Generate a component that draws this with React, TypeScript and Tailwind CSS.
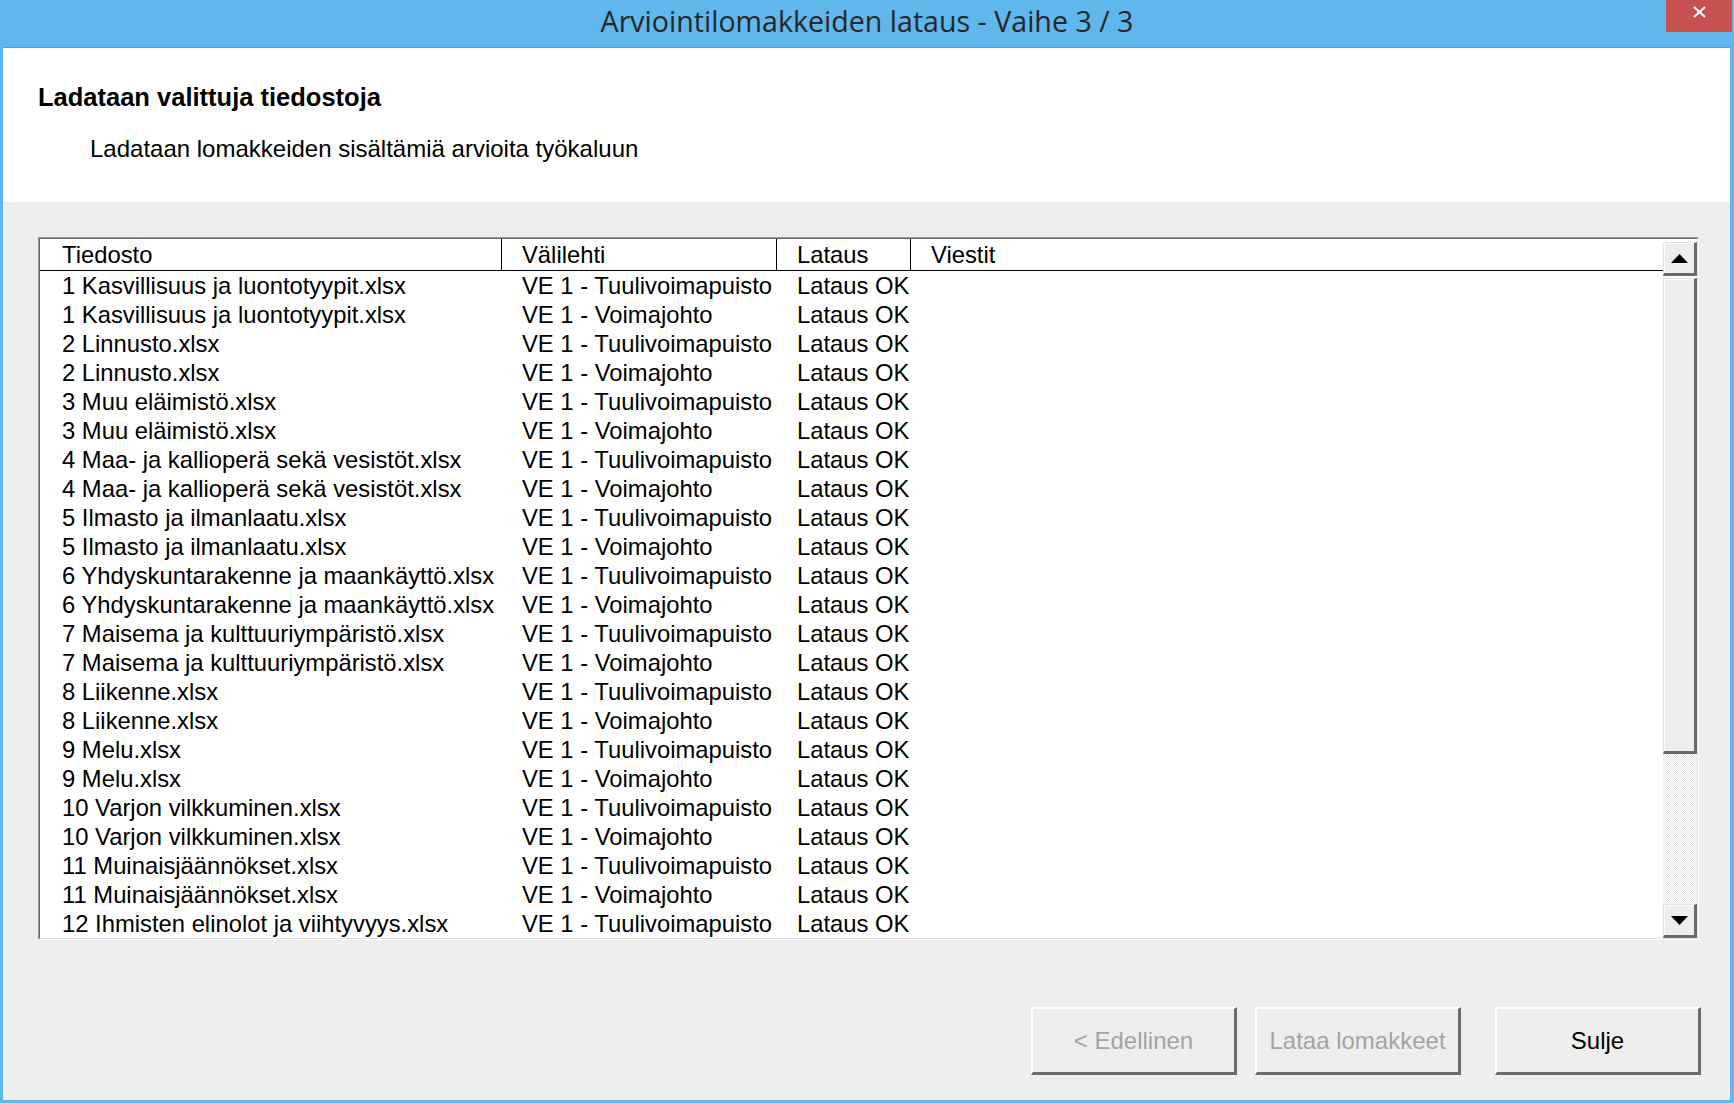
import React from 'react';

const files = [
    '1 Kasvillisuus ja luontotyypit.xlsx',
    '2 Linnusto.xlsx',
    '3 Muu eläimistö.xlsx',
    '4 Maa- ja kallioperä sekä vesistöt.xlsx',
    '5 Ilmasto ja ilmanlaatu.xlsx',
    '6 Yhdyskuntarakenne ja maankäyttö.xlsx',
    '7 Maisema ja kulttuuriympäristö.xlsx',
    '8 Liikenne.xlsx',
    '9 Melu.xlsx',
    '10 Varjon vilkkuminen.xlsx',
    '11 Muinaisjäännökset.xlsx',
    '12 Ihmisten elinolot ja viihtyvyys.xlsx',
];

const rows = files.flatMap((f) => [
    { file: f, tab: 'VE 1 - Tuulivoimapuisto', status: 'Lataus OK' },
    { file: f, tab: 'VE 1 - Voimajohto', status: 'Lataus OK' },
]);

const cols = 'grid grid-cols-[462px_275px_134px_1fr]';

const ScrollButton: React.FC<{ dir: 'up' | 'down' }> = ({ dir }) => (
    <div className="h-[34px] border-t border-l border-[#e3e3e3] border-b-[3px] border-r-[3px] border-b-[#6a6a6a] border-r-[#6a6a6a] bg-[#eeeeee]">
        <div className="h-full border-t border-l border-white flex items-center justify-center">
            <svg width="17" height="9" viewBox="0 0 17 9">
                {dir === 'up' ? <polygon points="8.5,0 17,9 0,9" fill="#000" /> : <polygon points="0,0 17,0 8.5,9" fill="#000" />}
            </svg>
        </div>
    </div>
);

const DialogButton: React.FC<{ label: string; disabled?: boolean }> = ({ label, disabled }) => (
    <button
        className={`w-[206px] h-[68px] bg-[#eeeeee] border-t-2 border-l-2 border-white border-b-[3px] border-r-[3px] border-b-[#6a6a6a] border-r-[#6a6a6a] text-[24px] ${disabled ? 'text-[#a3a3a3]' : 'text-black'}`}
    >
        {label}
    </button>
);

const App: React.FC = () => {
    return (
        <div className="w-[1734px] h-[1103px] bg-[#5fb7ec] flex flex-col font-['Liberation_Sans',Arial,sans-serif] text-black overflow-hidden">
            {/* title bar */}
            <div className="relative h-[47px] shrink-0 flex justify-center">
                <span className="font-['Open_Sans',sans-serif] text-[28.6px] leading-[42px] text-[#262626]">
                    Arviointilomakkeiden lataus - Vaihe 3 / 3
                </span>
                <div className="absolute top-0 right-[2px] w-[66px] h-[32px] bg-[#c75050] flex items-start justify-center pt-[6px]">
                    <svg width="13" height="12" viewBox="0 0 13 12">
                        <path d="M1 1 L12 11 M12 1 L1 11" stroke="#fff" strokeWidth="2.2" />
                    </svg>
                </div>
            </div>

            <div className="flex-1 ml-[3px] mr-[4px] mb-[3px] flex flex-col border-t border-[#4d9fd6]">
                {/* header panel */}
                <div className="h-[154px] shrink-0 bg-white pl-[35px] pt-[34px]">
                    <div className="text-[25.5px] font-bold leading-[30px]">Ladataan valittuja tiedostoja</div>
                    <div className="text-[24px] leading-[30px] mt-[22px] pl-[52px]">
                        Ladataan lomakkeiden sisältämiä arvioita työkaluun
                    </div>
                </div>

                {/* content */}
                <div className="flex-1 bg-[#eeeeee] flex flex-col">
                    <div className="mt-[35px] ml-[35px] mr-[31px] h-[703px] border-t border-l border-[#9a9a9a] border-b border-r border-b-white border-r-white">
                        <div className="h-full border-t border-l border-[#696969] border-b border-r border-b-[#e3e3e3] border-r-[#e3e3e3] flex">
                            <div className="flex-1 bg-white overflow-hidden text-[23.8px]">
                                <div className={`${cols} h-[32px] border-b border-black leading-[31px]`}>
                                    <div className="pl-[22px] border-r border-black">Tiedosto</div>
                                    <div className="pl-[20px] border-r border-black">Välilehti</div>
                                    <div className="pl-[20px] border-r border-black">Lataus</div>
                                    <div className="pl-[20px]">Viestit</div>
                                </div>
                                {rows.map((r, i) => (
                                    <div key={i} className={`${cols} h-[29px] leading-[29px] whitespace-nowrap`}>
                                        <div className="pl-[22px]">{r.file}</div>
                                        <div className="pl-[20px]">{r.tab}</div>
                                        <div className="pl-[20px]">{r.status}</div>
                                        <div />
                                    </div>
                                ))}
                            </div>
                            {/* scrollbar */}
                            <div className="w-[34px] bg-white pt-[3px] flex flex-col">
                                <ScrollButton dir="up" />
                                <div className="h-[476px] mt-[2px] border-t border-l border-[#e3e3e3] border-b-[3px] border-r-[3px] border-b-[#6a6a6a] border-r-[#6a6a6a] bg-[#eeeeee]">
                                    <div className="h-full border-t border-l border-white" />
                                </div>
                                <div className="flex-1 bg-[repeating-conic-gradient(#e6e6e6_0%_25%,#ffffff_0%_50%)] bg-[length:2px_2px]" />
                                <ScrollButton dir="down" />
                            </div>
                        </div>
                    </div>

                    <div className="mt-[67px] flex justify-end pr-[29px]">
                        <DialogButton label="< Edellinen" disabled />
                        <div className="ml-[18px]">
                            <DialogButton label="Lataa lomakkeet" disabled />
                        </div>
                        <div className="ml-[34px]">
                            <DialogButton label="Sulje" />
                        </div>
                    </div>
                </div>
            </div>
        </div>
    );
};

export default App;
